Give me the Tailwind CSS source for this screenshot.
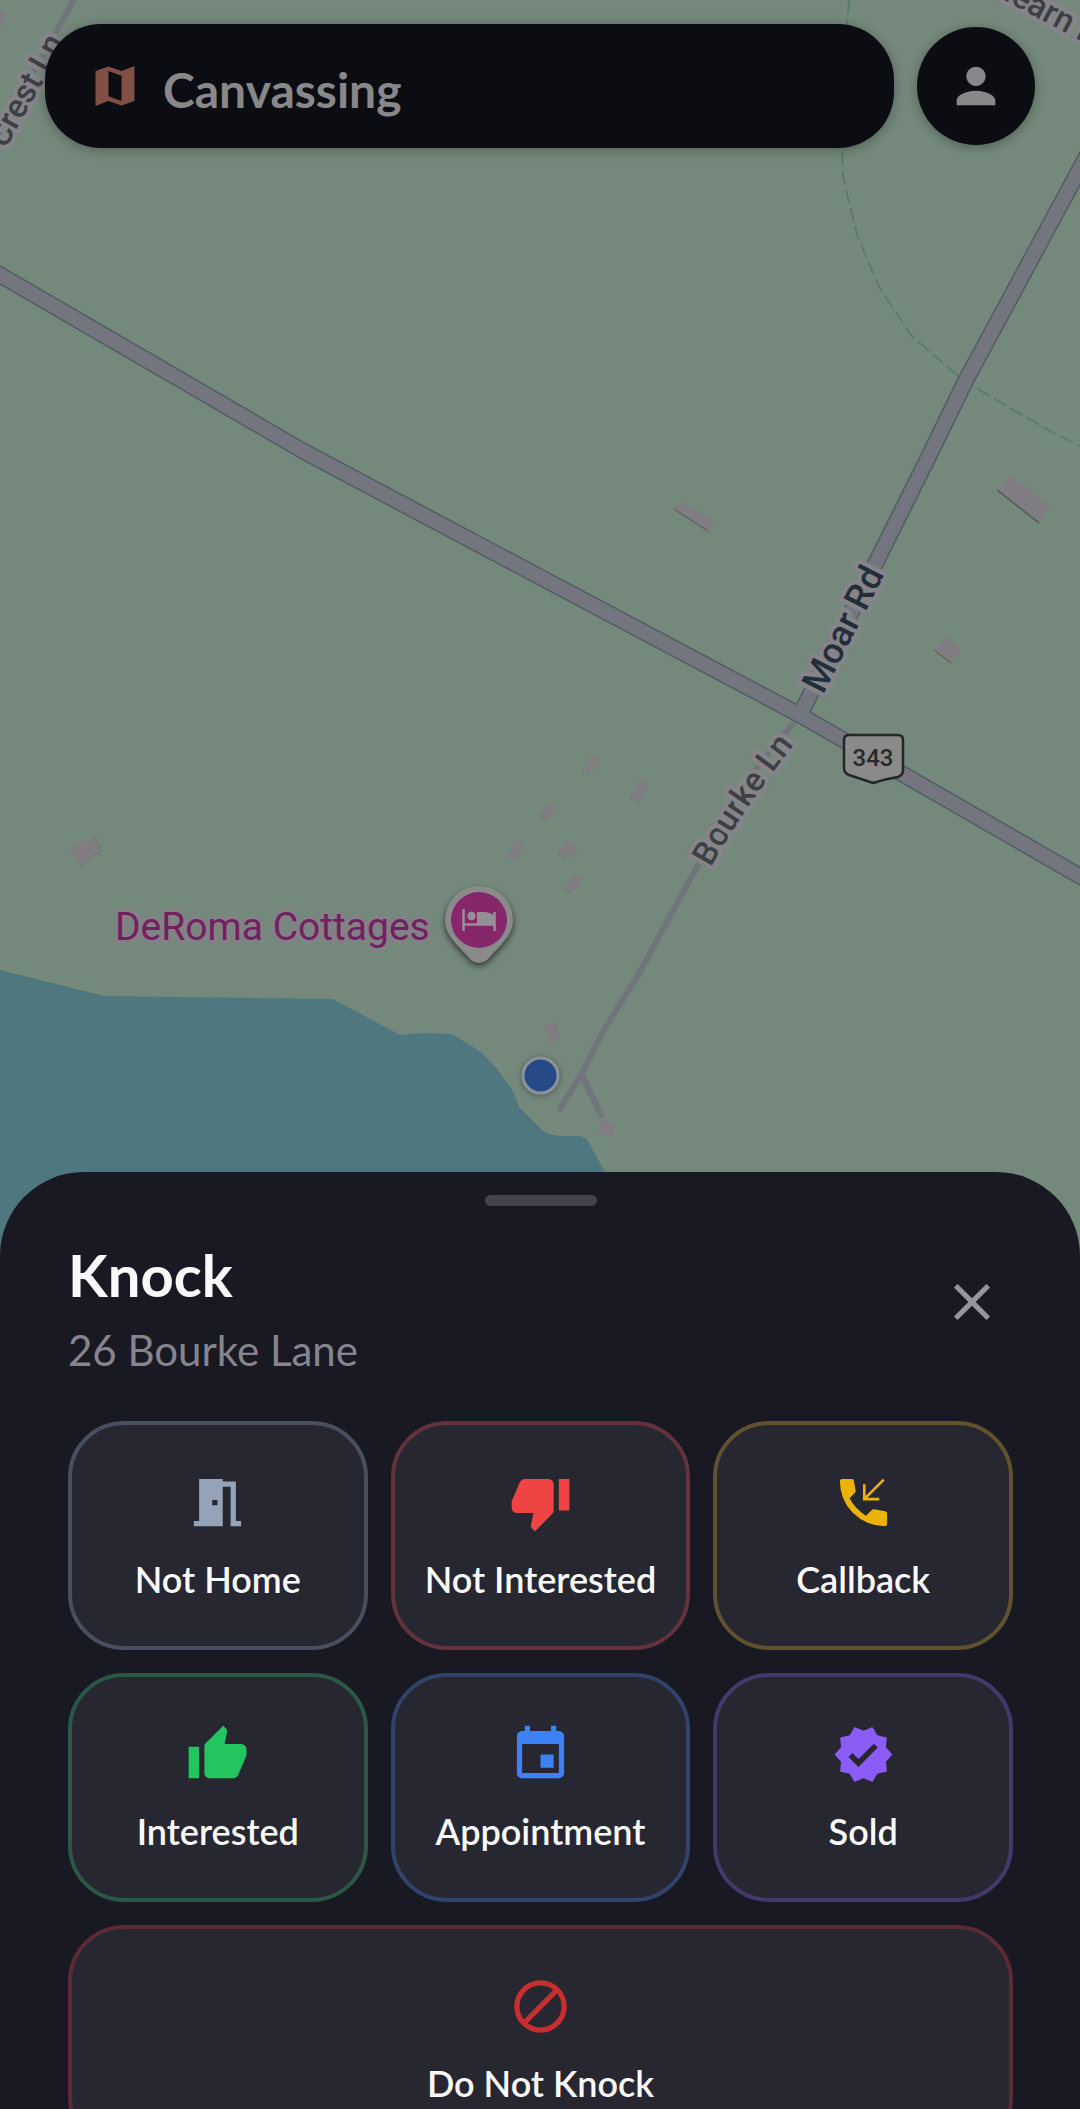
<!DOCTYPE html>
<html lang="en">
<head>
<meta charset="utf-8">
<meta name="viewport" content="width=device-width, initial-scale=1">
<title>Canvassing</title>
<script src="https://cdn.jsdelivr.net/npm/@tailwindcss/browser@4"></script>
</head>
<body class="bg-[#181923] font-['Lato',sans-serif]">
<div class="relative flex h-screen flex-col overflow-hidden">

  <!-- Map -->
  <svg class="absolute inset-0 h-full w-full" viewBox="0 0 1080 2109" preserveAspectRatio="xMidYMin slice" role="img" aria-label="Map">
    <rect width="1080" height="2109" fill="#74897b"/>
    <path d="M0 970 104 996 333 999 400 1035 425 1033 452 1034 481 1052 498 1070 513 1091 519 1107 543 1131 Q549 1135 560 1136L580 1136 587 1139 605 1172 660 1270 660 1400 0 1400Z" fill="#4f7780"/>
    <path d="M849 0 847 23 842 148 843 177 857 235 879 287 911 335 959 377 991 397 1050 431 1080 446" fill="none" stroke="#557767" stroke-width="1.5" stroke-dasharray="14 5"/>

    <!-- Buildings -->
    <g fill="#7f7d81">
      <path d="M682 502 714 521 708 533 674 510Z"/>
      <path d="M1011 475 1050 507 1039 523 997 491Z"/>
      <path d="M946 636 961 650 951 662 934 650Z"/>
      <path d="M94 836 102 851 80 865 70 849Z"/>
      <path d="M516 840 524 845 515 861 507 857Z"/>
      <path d="M592 754 600 759 592 774 584 769Z"/>
      <path d="M640 780 649 785 640 803 630 797Z"/>
      <path d="M549 802 557 807 547 820 540 814Z"/>
      <path d="M566 840 578 848 572 859 559 853Z"/>
      <path d="M574 874 583 879 573 894 564 888Z"/>
      <path d="M544 1025 556 1022 561 1040 549 1043Z"/>
      <path d="M602 1119 616 1124 612 1137 598 1131Z"/>
      <path d="M0 10 6 12Q5 22 0 28Z"/>
    </g>
    <g fill="none" stroke="#4e5a55" stroke-width="1.5">
      <path d="M997 490 1039 523"/>
      <path d="M674 509 708 531M934 650 951 663" stroke-width="1"/>
      <path d="M80 866 102 851 94 836M583 770l6 4M630 798l9 5M540 815l5 4M559 854l8 4M563 888l8 5" stroke-width="1" stroke-dasharray="1 2"/>
    </g>

    <!-- Roads -->
    <g fill="none" stroke="#70757c" stroke-width="6" stroke-linecap="round" stroke-linejoin="round">
      <path d="M76 -4 57 30 0 132"/>
      <path d="M800 715 757 768 698 865 675 907 640 972 602 1033 582 1073 560 1109M582 1075 601 1115"/>
    </g>
    <g fill="none" stroke-linejoin="round">
      <path d="M-10 269 303 451 540 577 800 715 1090 882M1090 150 966 380 927 460 800 715" stroke="#545d62" stroke-width="17"/>
      <path d="M-10 269 303 451 540 577 800 715 1090 882M1090 150 966 380 927 460 800 715" stroke="#73767f" stroke-width="14"/>
    </g>

    <!-- Road labels -->
    <path id="bourke" d="M711 867Q739 815 799 738" fill="none"/>
    <g font-family="Roboto, sans-serif" stroke="#858589" stroke-width="9" stroke-linejoin="round" paint-order="stroke" font-weight="500">
      <text transform="translate(823 695) rotate(-63)" font-size="36" fill="#222e3b">Moar Rd</text>
      <text font-size="33" fill="#3c4044"><textPath href="#bourke">Bourke Ln</textPath></text>
      <text transform="translate(65 42) rotate(-61)" text-anchor="end" font-size="33" fill="#3c4044">Crest Ln</text>
      <text transform="translate(974 -16) rotate(28)" font-size="33" fill="#3c4044">Ahearn Rd</text>
      <text x="115" y="940" font-size="39" font-weight="400" stroke="#828286" stroke-width="7" fill="#742060">DeRoma Cottages</text>
    </g>

    <!-- Route shield -->
    <path d="M849 735H898Q903 735 903 740V770Q903 775 898 777Q885 779 873 783Q861 779 849 775Q844 773 844 768V740Q844 735 849 735Z" fill="#8a8a8a" stroke="#232627" stroke-width="2.5"/>
    <text x="873" y="766" text-anchor="middle" font-family="Roboto, sans-serif" font-weight="500" font-size="24" fill="#27292b">343</text>

    <!-- Lodging pin -->
    <path d="M479 886a34 34 0 0 1 34 34c0 11-6 18-12 25l-14 15q-8 6-16 0l-14-15c-6-7-12-14-12-25a34 34 0 0 1 34-34Z" fill="#8a8a8a" class="drop-shadow-[0_3px_3px_rgba(0,0,0,0.6)]"/>
    <circle cx="479" cy="920" r="28" fill="#86276b"/>
    <path d="M463.500 909v22M494.500 912v19M463 924.500h32" stroke="#959095" stroke-width="2.600" fill="none"/>
    <circle cx="471.500" cy="916" r="4.200" fill="#959095"/>
    <path d="M477 912h8q8 1 10 6v6h-18Z" fill="#959095"/>

    <!-- Knock location -->
    <circle cx="540.500" cy="1075.500" r="17.500" fill="#264a87" stroke="#8c9399" stroke-width="3" class="drop-shadow-[0_1px_3px_rgba(0,0,0,0.35)]"/>
  </svg>

  <header class="relative flex flex-1 items-start gap-[23px] px-[45px] pt-6">
    <div class="flex h-[124px] flex-1 items-center gap-[22px] rounded-[56px] bg-[#0c0d12] pl-11 shadow-[0_2px_12px_rgba(0,0,0,0.3)]">
      <svg class="size-[52px] text-[#7f5043]" viewBox="0 0 24 24" fill="currentColor" aria-hidden="true"><path d="M15 5.100 9 3 3 5.020v16.200l6-2.330 6 2.100 6-2.020V2.770L15 5.100zm0 13.790-6-2.110V5.110l6 2.110v11.670z"/></svg>
      <h1 class="pt-2 text-[48px] leading-[56px] font-bold text-[#88888a]">Canvassing</h1>
    </div>
    <button type="button" aria-label="Profile" class="mt-[3px] flex size-[118px] items-center justify-center rounded-full bg-[#0c0d12] text-[#88888a] shadow-[0_2px_12px_rgba(0,0,0,0.3)]">
      <svg class="size-[58px]" viewBox="0 0 24 24" fill="currentColor" aria-hidden="true"><path d="M12 12c2.210 0 4-1.790 4-4s-1.790-4-4-4-4 1.790-4 4 1.790 4 4 4zm0 2c-2.670 0-8 1.340-8 4v2h16v-2c0-2.660-5.330-4-8-4z"/></svg>
    </button>
  </header>

  <!-- Bottom sheet -->
  <section aria-labelledby="sheet-title" class="relative h-4/9 shrink-0 overflow-y-auto rounded-t-[84px] bg-[#181923] pt-[23px] pr-[67px] pb-[68px] pl-[68px] [scrollbar-width:none]">
    <div class="mx-auto h-[11px] w-28 rounded-full bg-[#44434d]"></div>
    <div class="mt-[21px] flex items-center justify-between">
      <div>
        <h2 id="sheet-title" class="text-[58px] leading-[96px] font-bold text-[#fafafc]">Knock</h2>
        <p class="text-[42px] leading-[54px] text-[#86858e]">26 Bourke Lane</p>
      </div>
      <button type="button" aria-label="Close" class="p-[10px] text-[#96959f]">
        <svg class="size-[62px]" viewBox="0 0 24 24" fill="currentColor" aria-hidden="true"><path d="M19 6.410L17.590 5 12 10.590 6.410 5 5 6.410 10.590 12 5 17.590 6.410 19 12 13.410 17.590 19 19 17.590 13.410 12z"/></svg>
      </button>
    </div>

    <div class="mt-11 grid grid-cols-3 gap-[23px] text-[36px] leading-[46px] font-semibold text-[#fafafc]">
      <button type="button" class="flex flex-col items-center gap-[22px] rounded-[56px] border-4 border-[#4a4f5f] bg-[#272732] pt-[46px] pb-11 whitespace-nowrap">
        <svg class="size-[63px] text-[#94a3b8]" viewBox="0 0 24 24" fill="currentColor" aria-hidden="true"><path d="M14 6v15H3v-2h2V3h9v1h5v15h2v2h-4V6h-3zm-4 5v2h2v-2h-2z"/></svg>
        Not Home
      </button>
      <button type="button" class="flex flex-col items-center gap-[22px] rounded-[56px] border-4 border-[#63323c] bg-[#272732] pt-[46px] pb-11 whitespace-nowrap">
        <svg class="size-[63px] text-[#ef4444]" viewBox="0 0 24 24" fill="currentColor" aria-hidden="true"><path d="M15 3H6c-.830 0-1.540.500-1.840 1.220l-3.020 7.050c-.090.230-.140.470-.140.730v2c0 1.100.900 2 2 2h6.310l-.950 4.570-.030.320c0 .410.170.790.440 1.060L9.830 23l6.590-6.590c.360-.360.580-.860.580-1.410V5c0-1.100-.900-2-2-2zm4 0v12h4V3h-4z"/></svg>
        Not Interested
      </button>
      <button type="button" class="flex flex-col items-center gap-[22px] rounded-[56px] border-4 border-[#61522f] bg-[#272732] pt-[46px] pb-11 whitespace-nowrap">
        <svg class="size-[63px] text-[#eab308]" viewBox="0 0 24 24" fill="currentColor" aria-hidden="true"><path d="M3.700 3H7.700Q8.200 3 8.300 3.500L9 7.500Q9.050 7.900 8.800 8.200L6.700 10.400Q8.800 14.400 12.900 17L15.300 14.800Q15.600 14.500 16 14.600L20.300 15.300Q21 15.500 21 16V20.200Q21 21 20.100 21Q13 20.900 7.900 15.900Q3.100 11 3 4Q3 3 3.700 3Z"/><path d="M12.300 5v5.700H18M12.300 10.700 19.700 3.300" fill="none" stroke="currentColor"/></svg>
        Callback
      </button>
      <button type="button" class="flex flex-col items-center gap-[22px] rounded-[56px] border-4 border-[#2b5745] bg-[#272732] pt-[46px] pb-11 whitespace-nowrap">
        <svg class="size-[63px] text-[#22c55e]" viewBox="0 0 24 24" fill="currentColor" aria-hidden="true"><path d="M1 21h4V9H1v12zm22-11c0-1.100-.900-2-2-2h-6.310l.950-4.570.030-.320c0-.410-.170-.790-.440-1.060L14.170 1 7.590 7.590C7.220 7.950 7 8.450 7 9v10c0 1.100.900 2 2 2h9c.830 0 1.540-.500 1.840-1.220l3.020-7.050c.090-.230.140-.470.140-.730v-2z"/></svg>
        Interested
      </button>
      <button type="button" class="flex flex-col items-center gap-[22px] rounded-[56px] border-4 border-[#2f436b] bg-[#272732] pt-[46px] pb-11 whitespace-nowrap">
        <svg class="size-[63px] text-[#3b82f6]" viewBox="0 0 24 24" fill="currentColor" aria-hidden="true"><path d="M17 12h-5v5h5v-5zM16 1v2H8V1H6v2H5c-1.110 0-1.990.900-1.990 2L3 19c0 1.100.890 2 2 2h14c1.100 0 2-.900 2-2V5c0-1.100-.900-2-2-2h-1V1h-2zm3 18H5V8h14v11z"/></svg>
        Appointment
      </button>
      <button type="button" class="flex flex-col items-center gap-[22px] rounded-[56px] border-4 border-[#47386b] bg-[#272732] pt-[46px] pb-11 whitespace-nowrap">
        <svg class="size-[63px] text-[#8b5cf6]" viewBox="0 0 24 24" fill="currentColor" aria-hidden="true"><path d="M23 12l-2.440-2.790.340-3.690-3.610-.820-1.890-3.200L12 2.960 8.600 1.500 6.710 4.690 3.100 5.500l.340 3.700L1 12l2.440 2.790-.340 3.700 3.610.820L8.600 22.500l3.400-1.470 3.400 1.460 1.890-3.190 3.610-.820-.340-3.690L23 12zm-12.910 4.720l-3.800-3.810 1.480-1.480 2.320 2.330 5.850-5.870 1.480 1.480-7.330 7.350z"/></svg>
        Sold
      </button>
      <button type="button" class="col-span-3 flex flex-col items-center gap-[22px] rounded-[56px] border-4 border-[#5a2b34] bg-[#272732] pt-[46px] pb-11 whitespace-nowrap">
        <svg class="size-[63px] text-[#c82d30]" viewBox="0 0 24 24" fill="none" stroke="currentColor" stroke-width="2" aria-hidden="true"><circle cx="12" cy="12" r="9"/><path d="M18.300 5.700 5.700 18.300"/></svg>
        Do Not Knock
      </button>
    </div>
  </section>
</div>
</body>
</html>
